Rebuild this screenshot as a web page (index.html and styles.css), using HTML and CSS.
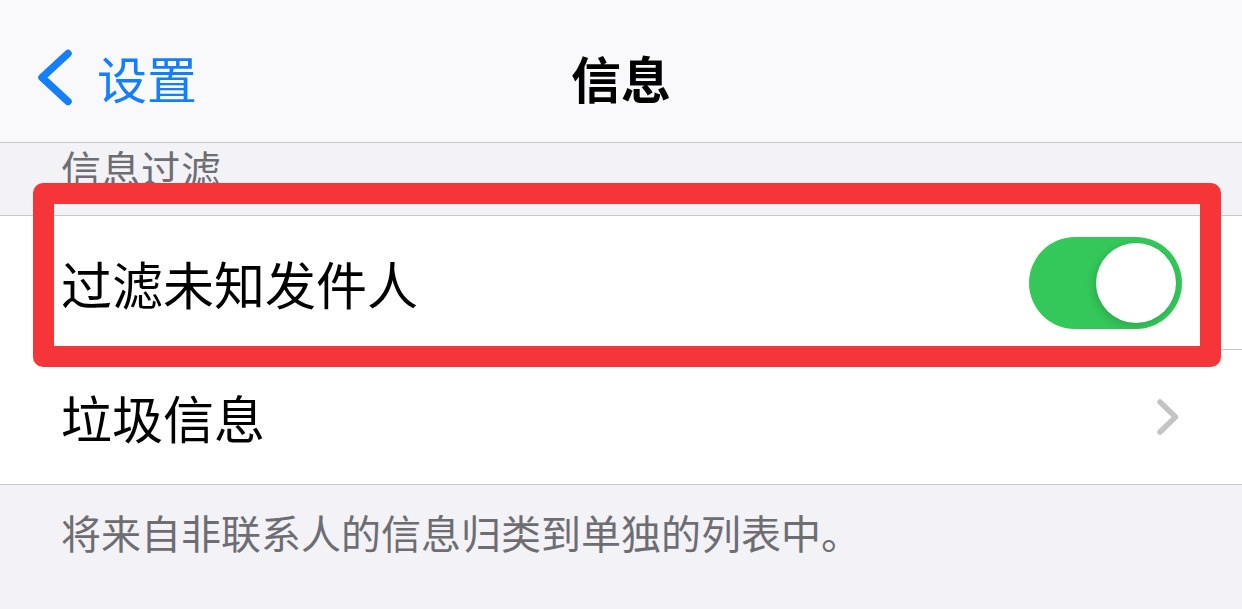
FILE: index.html
```html
<!DOCTYPE html>
<html lang="zh-CN">
<head>
<meta charset="utf-8">
<title>信息</title>
<link rel="stylesheet" href="styles.css">
</head>
<body>
<div class="screen">
  <header class="nav">
    <div class="nav-back">
      <svg class="back-chevron" width="36" height="57" viewBox="0 0 36 57" aria-hidden="true">
        <polyline points="31,4.5 5,28.5 31,52.5" fill="none" stroke="#147efb" stroke-width="7.5" stroke-linecap="round" stroke-linejoin="round"/>
      </svg>
      <span class="back-label">设置</span>
    </div>
    <div class="nav-title">信息</div>
    <div class="nav-spacer"></div>
  </header>

  <div class="section-header">信息过滤</div>

  <div class="group">
    <div class="row row-sep">
      <span class="row-label">过滤未知发件人</span>
      <span class="toggle"><span class="knob"></span></span>
    </div>
    <div class="row">
      <span class="row-label">垃圾信息</span>
      <svg class="chevron" width="24" height="38" viewBox="0 0 24 38" aria-hidden="true">
        <polyline points="4,4 19.5,19 4,34" fill="none" stroke="#c4c4c7" stroke-width="5.5" stroke-linecap="round" stroke-linejoin="round"/>
      </svg>
    </div>
  </div>

  <div class="section-footer">将来自非联系人的信息归类到单独的列表中。</div>

  <div class="highlight"></div>
</div>
</body>
</html>
```

FILE: styles.css
```css
html, body {
  margin: 0;
  padding: 0;
}

body {
  background: #f2f2f7;
  font-family: "Noto Sans CJK SC", "Noto Sans", sans-serif;
}

.screen {
  position: relative;
  width: 1242px;
  height: 609px;
  overflow: hidden;
  background: #f2f2f7;
}

.nav {
  box-sizing: border-box;
  height: 143px;
  padding-top: 12px;
  background: #f9f9fb;
  border-bottom: 1px solid #c8c7cc;
  display: grid;
  grid-template-columns: 1fr auto 1fr;
  align-items: center;
}

.nav-back {
  display: flex;
  align-items: center;
  padding-left: 37px;
  gap: 24px;
}

.back-chevron {
  display: block;
}

.back-label {
  font-size: 50px;
  line-height: 1;
  color: #147efb;
}

.nav-title {
  font-size: 50px;
  line-height: 1;
  font-weight: 700;
  color: #000;
}

.section-header {
  box-sizing: border-box;
  height: 72px;
  padding: 5px 0 0 61px;
  font-size: 40px;
  line-height: 1;
  color: #6d6d72;
}

.group {
  background: #fff;
  border-top: 1px solid #c8c7cc;
  border-bottom: 1px solid #c8c7cc;
}

.row {
  position: relative;
  box-sizing: border-box;
  height: 134px;
  padding: 0 60px 0 61px;
  display: flex;
  align-items: center;
  justify-content: space-between;
}

.row-sep::after {
  content: "";
  position: absolute;
  left: 61px;
  right: 0;
  bottom: 0;
  height: 1px;
  background: #c8c7cc;
}

.row-label {
  font-size: 51px;
  line-height: 1;
  color: #000;
}

.toggle {
  box-sizing: border-box;
  width: 153px;
  height: 92px;
  border-radius: 46px;
  background: #34c759;
  padding: 6px;
  display: flex;
  justify-content: flex-end;
}

.knob {
  width: 80px;
  height: 80px;
  border-radius: 50%;
  background: #fff;
  box-shadow: -2px 3px 8px rgba(0, 0, 0, 0.15), 0 0 1px rgba(0, 0, 0, 0.08);
}

.chevron {
  display: block;
  margin-right: 2px;
}

.section-footer {
  padding: 27px 0 0 61px;
  font-size: 40px;
  line-height: 1;
  color: #6d6d72;
}

.highlight {
  position: absolute;
  left: 33px;
  top: 183px;
  width: 1188px;
  height: 184px;
  box-sizing: border-box;
  border: 21px solid #f63538;
  border-radius: 10px;
}
```
